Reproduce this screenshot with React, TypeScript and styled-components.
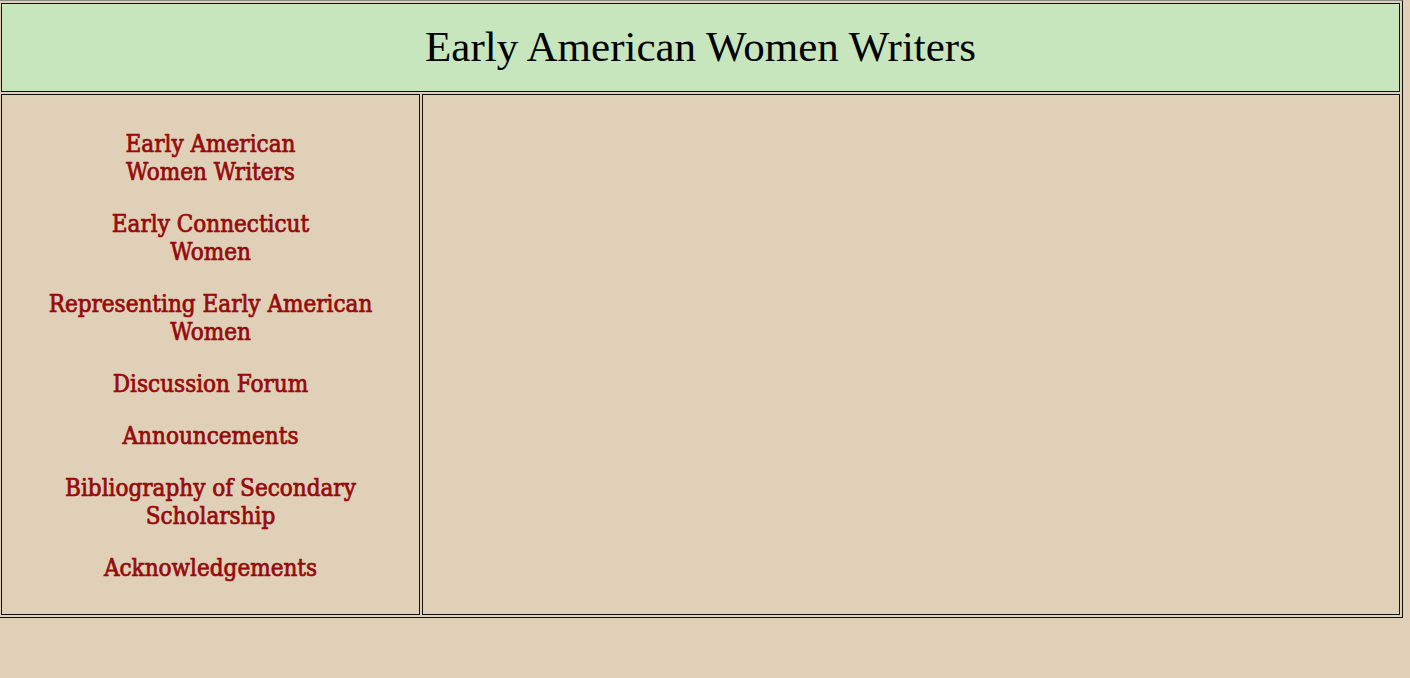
import React from 'react';
import styled, { createGlobalStyle } from 'styled-components';

const GlobalStyle = createGlobalStyle`
  html, body {
    margin: 0;
    padding: 0;
    background: #e0d0b8;
  }
`;

const Frame = styled.div`
  display: grid;
  grid-template-columns: 419px 978px;
  grid-template-rows: 89px 521px;
  gap: 2px;
  padding: 2px;
  margin-left: -2px;
  width: max-content;
  border: 1px solid;
  border-color: #8a8a8a #111 #111 #8a8a8a;
`;

const Cell = styled.div<{ $tone?: 'green' | 'beige' }>`
  border: 1px solid #111;
  background: ${(p) => (p.$tone === 'green' ? '#c7e6bd' : '#e0d0b8')};
`;

const Header = styled(Cell)`
  grid-column: 1 / span 2;
  display: flex;
  align-items: center;
  justify-content: center;
  padding-bottom: 2px;
`;

const Title = styled.h1`
  margin: 0;
  font-family: 'Liberation Serif', 'Times New Roman', serif;
  font-weight: normal;
  font-size: 43px;
  line-height: 50px;
  color: #000;
`;

const Nav = styled(Cell)`
  display: flex;
  flex-direction: column;
  align-items: center;
  padding-top: 35px;
  gap: 24px;
`;

const NavLink = styled.a`
  display: block;
  text-align: center;
  text-decoration: none;
  color: #960a0a;
  font-family: 'DejaVu Serif Condensed', 'DejaVu Serif', serif;
  font-stretch: condensed;
  font-size: 24px;
  line-height: 28px;
  -webkit-text-stroke: 0.7px #960a0a;
`;

const links: React.ReactNode[] = [
  <>Early American<br />Women Writers</>,
  <>Early Connecticut<br />Women</>,
  <>Representing Early American<br />Women</>,
  <>Discussion Forum</>,
  <>Announcements</>,
  <>Bibliography of Secondary<br />Scholarship</>,
  <>Acknowledgements</>,
];

export default function App() {
  return (
    <>
      <GlobalStyle />
      <Frame>
        <Header $tone="green">
          <Title>Early American Women Writers</Title>
        </Header>
        <Nav>
          {links.map((label, i) => (
            <NavLink key={i} href="#">
              {label}
            </NavLink>
          ))}
        </Nav>
        <Cell />
      </Frame>
    </>
  );
}
